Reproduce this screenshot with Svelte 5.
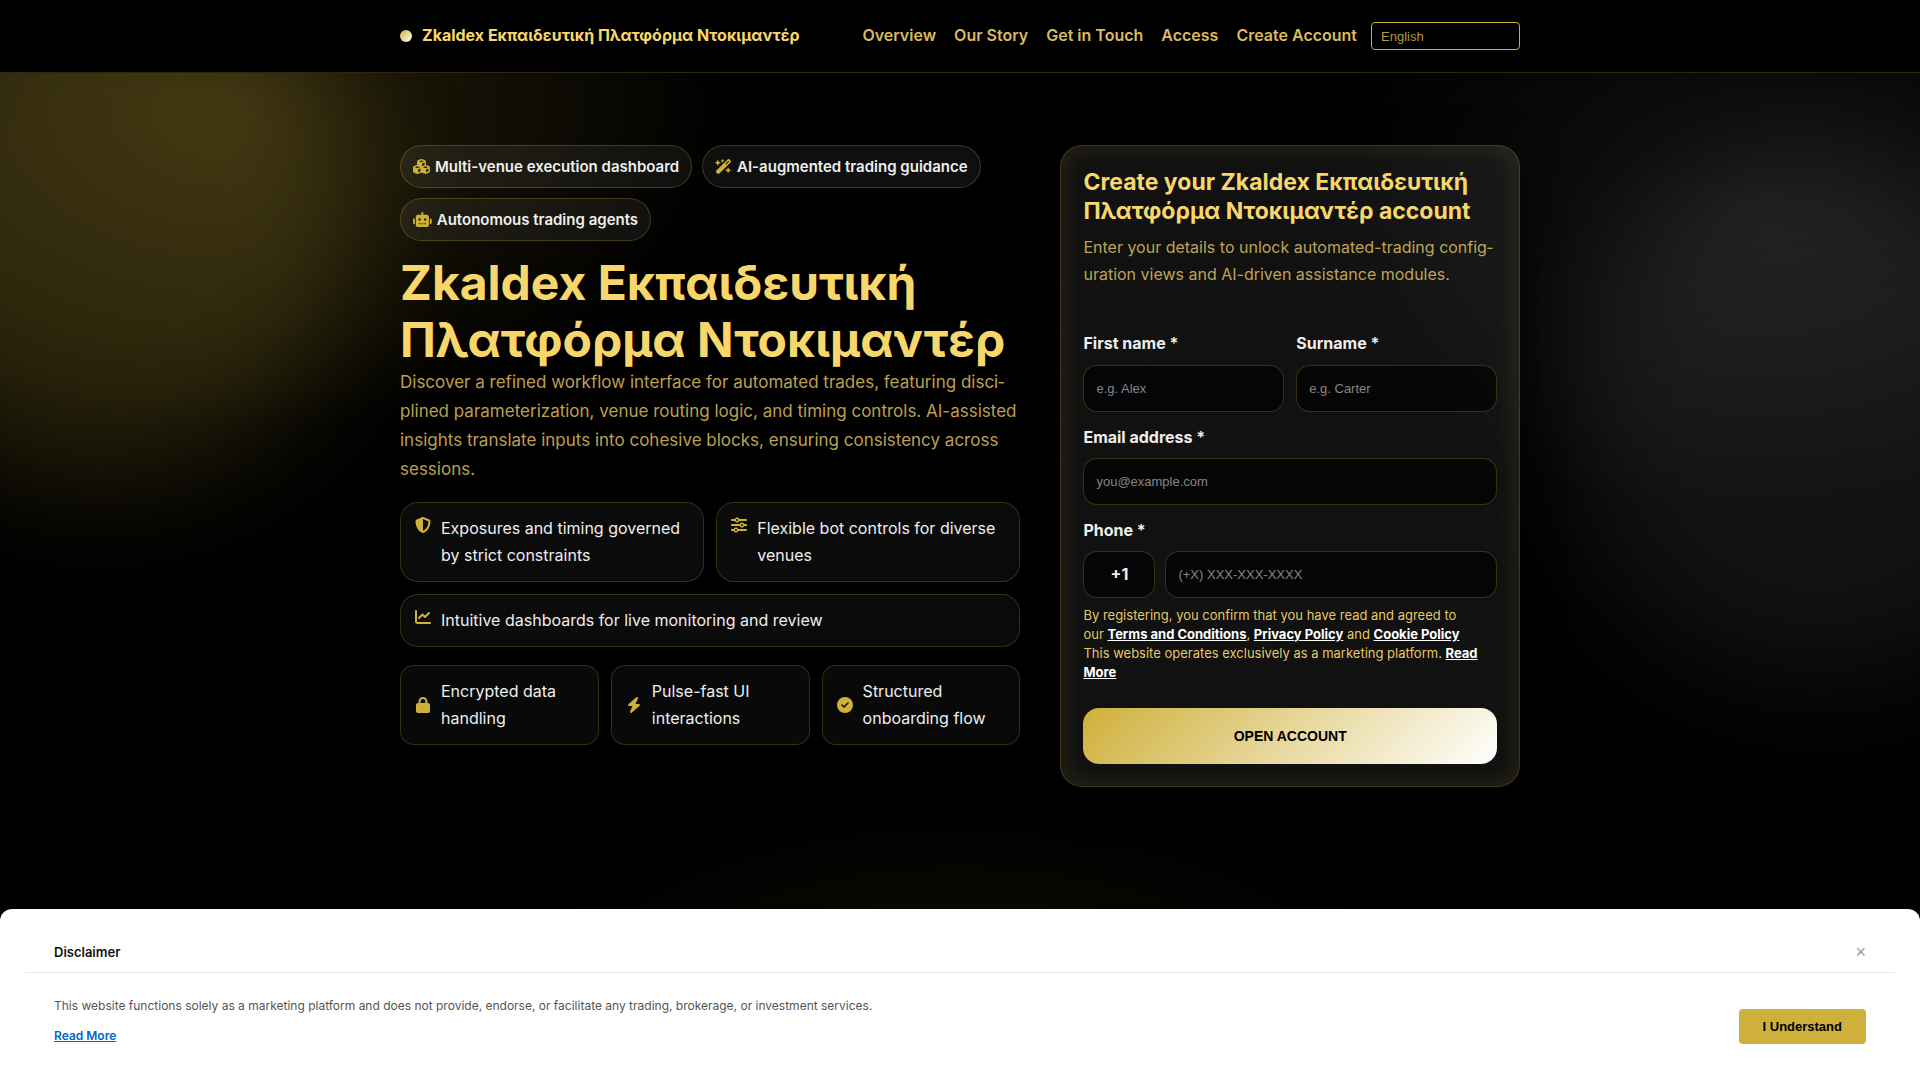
<script lang="ts">
	interface Icon {
		width: number;
		path: string;
	}

	const icons: Record<string, Icon> = {
		cubes: {
			width: 576,
			path: 'M290.8 48.6l78.4 29.7L288 109.5 206.8 78.3l78.4-29.7c1.8-.7 3.8-.7 5.7 0zM136 92.5V204.7c-1.3 .4-2.6 .8-3.9 1.3l-96 36.4C14.4 250.6 0 271.5 0 294.7V413.9c0 22.2 13.1 42.3 33.5 51.3l96 42.2c14.4 6.3 30.7 6.3 45.1 0L288 457.5l113.5 49.9c14.4 6.3 30.7 6.3 45.1 0l96-42.2c20.3-8.9 33.5-29.1 33.5-51.3V294.7c0-23.3-14.4-44.1-36.1-52.4l-96-36.4c-1.3-.5-2.6-.9-3.9-1.3V92.5c0-23.3-14.4-44.1-36.1-52.4l-96-36.4c-12.8-4.8-26.9-4.8-39.7 0l-96 36.4C150.4 48.4 136 69.3 136 92.5zM392 210.6l-82.4 31.2V152.6L392 121v89.6zM154.8 250.9l78.4 29.7L152 311.7 70.8 280.6l78.4-29.7c1.8-.7 3.8-.7 5.7 0zm18.8 204.4V354.8L256 323.2v95.9l-82.4 36.2zM421.2 250.9c1.8-.7 3.8-.7 5.7 0l78.4 29.7L424 311.7l-81.2-31.1 78.4-29.7zM523.2 421.2l-77.6 34.1V354.8L528 323.2v90.7c0 3.2-1.9 6-4.8 7.3z'
		},
		wand: {
			width: 576,
			path: 'M234.7 42.7L197 56.8c-3 1.1-5 4-5 7.2s2 6.1 5 7.2l37.7 14.1L248.8 123c1.1 3 4 5 7.2 5s6.1-2 7.2-5l14.1-37.7L315 71.2c3-1.1 5-4 5-7.2s-2-6.1-5-7.2L277.3 42.7 263.2 5c-1.1-3-4-5-7.2-5s-6.1 2-7.2 5L234.7 42.7zM46.1 395.4c-18.7 18.7-18.7 49.1 0 67.9l34.6 34.6c18.7 18.7 49.1 18.7 67.9 0L529.9 116.5c18.7-18.7 18.7-49.1 0-67.9L495.3 14.1c-18.7-18.7-49.1-18.7-67.9 0L46.1 395.4zM484.6 82.6l-105 105-23.3-23.3 105-105 23.3 23.3zM7.5 117.2C3 118.9 0 123.2 0 128s3 9.1 7.5 10.8L64 160l21.2 56.5c1.7 4.5 6 7.5 10.8 7.5s9.1-3 10.8-7.5L128 160l56.5-21.2c4.5-1.7 7.5-6 7.5-10.8s-3-9.1-7.5-10.8L128 96 106.8 39.5C105.1 35 100.8 32 96 32s-9.1 3-10.8 7.5L64 96 7.5 117.2zm352 256c-4.5 1.7-7.5 6-7.5 10.8s3 9.1 7.5 10.8L416 416l21.2 56.5c1.7 4.5 6 7.5 10.8 7.5s9.1-3 10.8-7.5L480 416l56.5-21.2c4.5-1.7 7.5-6 7.5-10.8s-3-9.1-7.5-10.8L480 352l-21.2-56.5c-1.7-4.5-6-7.5-10.8-7.5s-9.1 3-10.8 7.5L416 352l-56.5 21.2z'
		},
		robot: {
			width: 640,
			path: 'M320 0c17.7 0 32 14.3 32 32V96H472c39.8 0 72 32.2 72 72V440c0 39.8-32.2 72-72 72H168c-39.8 0-72-32.2-72-72V168c0-39.8 32.2-72 72-72H288V32c0-17.7 14.3-32 32-32zM208 384c-8.8 0-16 7.2-16 16s7.2 16 16 16h32c8.8 0 16-7.2 16-16s-7.2-16-16-16H208zm96 0c-8.8 0-16 7.2-16 16s7.2 16 16 16h32c8.8 0 16-7.2 16-16s-7.2-16-16-16H304zm96 0c-8.8 0-16 7.2-16 16s7.2 16 16 16h32c8.8 0 16-7.2 16-16s-7.2-16-16-16H400zM264 256a40 40 0 1 0 -80 0 40 40 0 1 0 80 0zm152 40a40 40 0 1 0 0-80 40 40 0 1 0 0 80zM48 224H64V416H48c-26.5 0-48-21.5-48-48V272c0-26.5 21.5-48 48-48zm544 0c26.5 0 48 21.5 48 48v96c0 26.5-21.5 48-48 48H576V224h16z'
		},
		shield: {
			width: 512,
			path: 'M256 0c4.6 0 9.2 1 13.4 2.9L457.7 82.8c22 9.3 38.4 31 38.3 57.2c-.5 99.2-41.3 280.7-213.6 363.2c-16.7 8-36.1 8-52.8 0C57.3 420.7 16.5 239.2 16 140c-.1-26.2 16.3-47.9 38.3-57.2L242.7 2.9C246.8 1 251.4 0 256 0zm0 66.8V444.8C394 378 431.1 230.1 432 141.4L256 66.8l0 0z'
		},
		sliders: {
			width: 512,
			path: 'M0 416c0 17.7 14.3 32 32 32l54.7 0c12.3 28.3 40.5 48 73.3 48s61-19.7 73.3-48L480 448c17.7 0 32-14.3 32-32s-14.3-32-32-32l-246.7 0c-12.3-28.3-40.5-48-73.3-48s-61 19.7-73.3 48L32 384c-17.7 0-32 14.3-32 32zm128 0a32 32 0 1 1 64 0 32 32 0 1 1 -64 0zM320 256a32 32 0 1 1 64 0 32 32 0 1 1 -64 0zm32-80c-32.8 0-61 19.7-73.3 48L32 224c-17.7 0-32 14.3-32 32s14.3 32 32 32l246.7 0c12.3 28.3 40.5 48 73.3 48s61-19.7 73.3-48l54.7 0c17.7 0 32-14.3 32-32s-14.3-32-32-32l-54.7 0c-12.3-28.3-40.5-48-73.3-48zM192 128a32 32 0 1 1 0-64 32 32 0 1 1 0 64zm73.3-64C253 35.7 224.8 16 192 16s-61 19.7-73.3 48L32 64C14.3 64 0 78.3 0 96s14.3 32 32 32l86.7 0c12.3 28.3 40.5 48 73.3 48s61-19.7 73.3-48L480 128c17.7 0 32-14.3 32-32s-14.3-32-32-32L265.3 64z'
		},
		chart: {
			width: 512,
			path: 'M64 64c0-17.7-14.3-32-32-32S0 46.3 0 64V400c0 44.2 35.8 80 80 80H480c17.7 0 32-14.3 32-32s-14.3-32-32-32H80c-8.8 0-16-7.2-16-16V64zm406.6 86.6c12.5-12.5 12.5-32.8 0-45.3s-32.8-12.5-45.3 0L320 210.7l-57.4-57.4c-12.5-12.5-32.8-12.5-45.3 0l-112 112c-12.5 12.5-12.5 32.8 0 45.3s32.8 12.5 45.3 0L240 221.3l57.4 57.4c12.5 12.5 32.8 12.5 45.3 0l128-128z'
		},
		lock: {
			width: 448,
			path: 'M144 144v48H304V144c0-44.2-35.8-80-80-80s-80 35.8-80 80zM80 192V144C80 64.5 144.5 0 224 0s144 64.5 144 144v48h16c35.3 0 64 28.7 64 64V448c0 35.3-28.7 64-64 64H64c-35.3 0-64-28.7-64-64V256c0-35.3 28.7-64 64-64H80z'
		},
		bolt: {
			width: 448,
			path: 'M349.4 44.6c5.9-13.7 1.5-29.7-10.6-38.5s-28.6-8-39.9 1.8l-256 224c-10 8.8-13.6 22.9-8.9 35.3S50.7 288 64 288H175.5L98.6 467.4c-5.9 13.7-1.5 29.7 10.6 38.5s28.6 8 39.9-1.8l256-224c10-8.8 13.6-22.9 8.9-35.3s-16.6-20.7-30-20.7H272.5L349.4 44.6z'
		},
		check: {
			width: 512,
			path: 'M256 512A256 256 0 1 0 256 0a256 256 0 1 0 0 512zM369 209L241 337c-9.4 9.4-24.6 9.4-33.9 0l-64-64c-9.4-9.4-9.4-24.6 0-33.9s24.6-9.4 33.9 0l47 47L335 175c9.4-9.4 24.6-9.4 33.9 0s9.4 24.6 0 33.9z'
		}
	};

	const brand = 'Zkaldex Εκπαιδευτική Πλατφόρμα Ντοκιμαντέρ';

	const navLinks = ['Overview', 'Our Story', 'Get in Touch', 'Access', 'Create Account'];

	const tags = [
		{ icon: 'cubes', text: 'Multi-venue execution dashboard' },
		{ icon: 'wand', text: 'AI-augmented trading guidance' },
		{ icon: 'robot', text: 'Autonomous trading agents' }
	];

	const features = [
		{ icon: 'shield', text: 'Exposures and timing governed by strict constraints' },
		{ icon: 'sliders', text: 'Flexible bot controls for diverse venues' },
		{ icon: 'chart', text: 'Intuitive dashboards for live monitoring and review', wide: true }
	];

	const badges = [
		{ icon: 'lock', text: 'Encrypted data handling' },
		{ icon: 'bolt', text: 'Pulse-fast UI interactions' },
		{ icon: 'check', text: 'Structured onboarding flow' }
	];

	let showDisclaimer = $state(true);
</script>

{#snippet icon(name: string)}
	<svg class="icon" viewBox="0 0 {icons[name].width} 512" aria-hidden="true">
		<path d={icons[name].path} />
	</svg>
{/snippet}

<div class="page">
	<div class="grid-lines"></div>
	<div class="glow glow-gold"></div>
	<div class="glow glow-white"></div>

	<header class="header">
		<div class="container header-row">
			<a class="brand" href="#top"><span class="dot"></span>{brand}</a>
			<nav class="nav">
				{#each navLinks as link}
					<a href="#{link.toLowerCase().replaceAll(' ', '-')}">{link}</a>
				{/each}
				<select class="lang" aria-label="Language">
					<option>English</option>
				</select>
			</nav>
		</div>
	</header>

	<main class="container hero">
		<section>
			<div class="tags">
				{#each tags as tag}
					<span class="tag">{@render icon(tag.icon)}{tag.text}</span>
				{/each}
			</div>
			<h1>{brand}</h1>
			<p class="lead">
				Discover a refined workflow interface for automated trades, featuring disci&shy;plined
				parameterization, venue routing logic, and timing controls. AI-assisted insights translate
				inputs into cohesive blocks, ensuring consistency across sessions.
			</p>
			<ul class="features">
				{#each features as f}
					<li class="feature" class:wide={f.wide}>{@render icon(f.icon)}<span>{f.text}</span></li>
				{/each}
			</ul>
			<ul class="badges">
				{#each badges as b}
					<li class="badge">{@render icon(b.icon)}<span>{b.text}</span></li>
				{/each}
			</ul>
		</section>

		<section class="card">
			<h2>Create your {brand} account</h2>
			<p class="card-text">
				Enter your details to unlock automated-trading config&shy;uration views and AI-driven
				assistance modules.
			</p>
			<form onsubmit={(e) => e.preventDefault()}>
				<div class="names">
					<div class="field">
						<label for="first-name">First name *</label>
						<input id="first-name" type="text" placeholder="e.g. Alex" />
					</div>
					<div class="field">
						<label for="surname">Surname *</label>
						<input id="surname" type="text" placeholder="e.g. Carter" />
					</div>
				</div>
				<div class="field">
					<label for="email">Email address *</label>
					<input id="email" type="email" placeholder="you@example.com" />
				</div>
				<div class="field">
					<label for="phone">Phone *</label>
					<div class="phone-row">
						<span class="code">+1</span>
						<input id="phone" type="tel" placeholder="(+X) XXX-XXX-XXXX" />
					</div>
				</div>
				<p class="terms">
					By registering, you confirm that you have read and agreed to<br />
					our <a href="#terms">Terms and Conditions</a>, <a href="#privacy">Privacy Policy</a> and
					<a href="#cookies">Cookie Policy</a><br />
					This website operates exclusively as a marketing platform.
					<a href="#read-more">Read More</a>
				</p>
				<button class="submit" type="submit">OPEN ACCOUNT</button>
			</form>
		</section>
	</main>

	{#if showDisclaimer}
		<aside class="disclaimer">
			<div class="disclaimer-head">
				<strong>Disclaimer</strong>
				<button class="close" aria-label="Close" onclick={() => (showDisclaimer = false)}>×</button>
			</div>
			<div class="disclaimer-body">
				<div>
					<p>
						This website functions solely as a marketing platform and does not provide, endorse, or
						facilitate any trading, brokerage, or investment services.
					</p>
					<a href="#disclaimer">Read More</a>
				</div>
				<button class="accept" onclick={() => (showDisclaimer = false)}>I Understand</button>
			</div>
		</aside>
	{/if}
</div>

<style>
	:global(body) {
		background: #000;
	}

	.page {
		--gold: #cfb03a;
		--gold-light: #f7d76b;
		--gold-soft: rgba(247, 215, 107, 0.76);
		--line: rgba(207, 176, 58, 0.25);
		position: relative;
		min-height: 100vh;
		overflow: hidden;
		font-family: Inter, 'Liberation Sans', sans-serif;
		font-size: 16px;
		line-height: 1.7;
		color: #eee;
		background:
			radial-gradient(500px 330px at 12% 10%, rgba(207, 176, 58, 0.18), transparent),
			radial-gradient(460px 320px at 92% 20%, rgba(255, 255, 255, 0.08), transparent),
			radial-gradient(500px 280px at 50% 100%, rgba(207, 176, 58, 0.1), transparent),
			#000;
	}

	.page *,
	.page {
		box-sizing: border-box;
	}

	.grid-lines {
		position: absolute;
		inset: 0;
		background:
			repeating-linear-gradient(90deg, rgba(207, 176, 58, 0.03) 0 1px, transparent 1px 44px),
			repeating-linear-gradient(0deg, rgba(207, 176, 58, 0.03) 0 1px, transparent 1px 44px);
		mask-image: radial-gradient(400px 260px at 50% 36%, #000, transparent);
	}

	.glow {
		position: absolute;
		width: 520px;
		height: 520px;
		border-radius: 50%;
		filter: blur(60px);
	}

	.glow-gold {
		left: -160px;
		top: -40px;
		background: rgba(207, 176, 58, 0.18);
	}

	.glow-white {
		right: -160px;
		top: 160px;
		background: rgba(255, 255, 255, 0.07);
	}

	.container {
		width: 100%;
		max-width: 1120px;
		margin: 0 auto;
	}

	.header {
		position: relative;
		background: rgba(0, 0, 0, 0.97);
		border-bottom: 1px solid rgba(207, 176, 58, 0.22);
	}

	.header-row {
		display: flex;
		align-items: center;
		justify-content: space-between;
		min-height: 72px;
	}

	.brand {
		display: flex;
		align-items: center;
		gap: 10px;
		font-weight: 700;
		color: var(--gold-light);
		text-decoration: none;
	}

	.dot {
		width: 12px;
		height: 12px;
		border-radius: 50%;
		background: linear-gradient(135deg, var(--gold), #fff);
	}

	.nav {
		display: flex;
		align-items: center;
		gap: 18px;
	}

	.nav a {
		font-weight: 600;
		color: rgba(247, 215, 107, 0.88);
		text-decoration: none;
	}

	.lang {
		appearance: none;
		width: 149px;
		height: 28px;
		margin-left: -4px;
		padding: 0 9px;
		border: 1px solid var(--gold);
		border-radius: 4px;
		background: transparent;
		font: 13px 'Liberation Sans', Arial, sans-serif;
		color: #b09a42;
	}

	.hero {
		position: relative;
		display: grid;
		grid-template-columns: 1.35fr 1fr;
		align-items: start;
		gap: 40px;
		padding-top: 72px;
	}

	.icon {
		height: 16px;
		flex-shrink: 0;
		fill: var(--gold);
	}

	.tags {
		display: flex;
		flex-wrap: wrap;
		gap: 10px;
	}

	.tag {
		display: inline-flex;
		align-items: center;
		gap: 5px;
		padding: 7px 12px;
		border: 1px solid var(--line);
		border-radius: 22px;
		background: rgba(255, 255, 255, 0.06);
		font-size: 15px;
		font-weight: 600;
		line-height: 27px;
	}

	.tag .icon {
		height: 15px;
	}

	h1 {
		margin: 13px 0 0;
		font-size: 48px;
		font-weight: 700;
		line-height: 57px;
		color: var(--gold-light);
	}

	.lead {
		margin: 0;
		font-size: 17px;
		line-height: 29px;
		color: var(--gold-soft);
	}

	ul {
		list-style: none;
		margin: 18px 0 0;
		padding: 0;
		display: grid;
		gap: 12px;
	}

	.features {
		grid-template-columns: 1fr 1fr;
	}

	.badges {
		grid-template-columns: repeat(3, 1fr);
	}

	.feature,
	.badge {
		display: flex;
		gap: 10px;
		padding: 12px 14px;
		border: 1px solid rgba(207, 176, 58, 0.22);
		border-radius: 18px;
		background: rgba(255, 255, 255, 0.045);
		line-height: 27px;
	}

	.feature .icon,
	.badge .icon {
		width: 16px;
	}

	.feature .icon {
		margin-top: 2px;
	}

	.wide {
		grid-column: 1 / -1;
	}

	.badge {
		align-items: center;
		border-radius: 14px;
		background: rgba(255, 255, 255, 0.035);
	}

	.card {
		padding: 22px;
		border: 1px solid var(--line);
		border-radius: 22px;
		background: rgba(255, 255, 255, 0.065);
		box-shadow:
			0 10px 40px rgba(0, 0, 0, 0.6),
			inset 0 0 24px rgba(207, 176, 58, 0.14);
	}

	h2 {
		margin: 0 0 8px;
		font-size: 23px;
		font-weight: 700;
		line-height: 29px;
		color: var(--gold-light);
	}

	.card-text {
		margin: 0 0 42px;
		color: var(--gold-soft);
	}

	form {
		display: grid;
		gap: 12px;
	}

	.names {
		display: grid;
		grid-template-columns: 1fr 1fr;
		gap: 12px;
	}

	.field {
		display: grid;
		gap: 7px;
	}

	label {
		font-weight: 700;
	}

	input,
	.code {
		width: 100%;
		height: 47px;
		padding: 0 12px;
		border: 1px solid var(--line);
		border-radius: 14px;
		background: rgba(0, 0, 0, 0.65);
		color: #eee;
	}

	input {
		font: 13px 'Liberation Sans', Arial, sans-serif;
	}

	input::placeholder {
		color: #858585;
	}

	.phone-row {
		display: grid;
		grid-template-columns: 72px 1fr;
		gap: 10px;
	}

	.code {
		display: flex;
		align-items: center;
		justify-content: center;
		font-weight: 700;
	}

	.terms {
		margin: -4px 0 14px;
		font-size: 13px;
		line-height: 19px;
		color: rgba(247, 215, 107, 0.95);
	}

	.terms a {
		color: #fff;
		font-weight: 700;
	}

	.submit {
		height: 56px;
		border: 0;
		border-radius: 16px;
		background: linear-gradient(135deg, var(--gold), #fff);
		font: 700 14px 'Liberation Sans', Arial, sans-serif;
		color: #000;
		cursor: pointer;
	}

	.disclaimer {
		position: fixed;
		inset: auto 0 0;
		padding: 24px 25px 34px;
		border-radius: 12px 12px 0 0;
		background: #fff;
		color: #555;
		font-size: 12px;
	}

	.disclaimer-head {
		display: flex;
		align-items: center;
		justify-content: space-between;
		height: 40px;
		padding: 0 29px;
		border-bottom: 1px solid #e8e8e8;
	}

	.disclaimer-head strong {
		font-size: 13px;
		font-weight: 600;
		color: #111;
	}

	.close {
		padding: 0;
		border: 0;
		background: none;
		font: 18px 'Liberation Sans', Arial, sans-serif;
		color: #999;
		cursor: pointer;
	}

	.disclaimer-body {
		display: flex;
		align-items: flex-end;
		justify-content: space-between;
		padding: 23px 29px 0;
	}

	.disclaimer-body p {
		margin: 0 0 10px;
		line-height: 20px;
	}

	.disclaimer-body a {
		display: inline-block;
		font-weight: 600;
		line-height: 20px;
		color: #0066cc;
	}

	.accept {
		height: 35px;
		margin-bottom: 2px;
		padding: 0 24px;
		border: 0;
		border-radius: 4px;
		background: var(--gold);
		font: 700 13px 'Liberation Sans', Arial, sans-serif;
		color: #000;
		cursor: pointer;
	}
</style>
